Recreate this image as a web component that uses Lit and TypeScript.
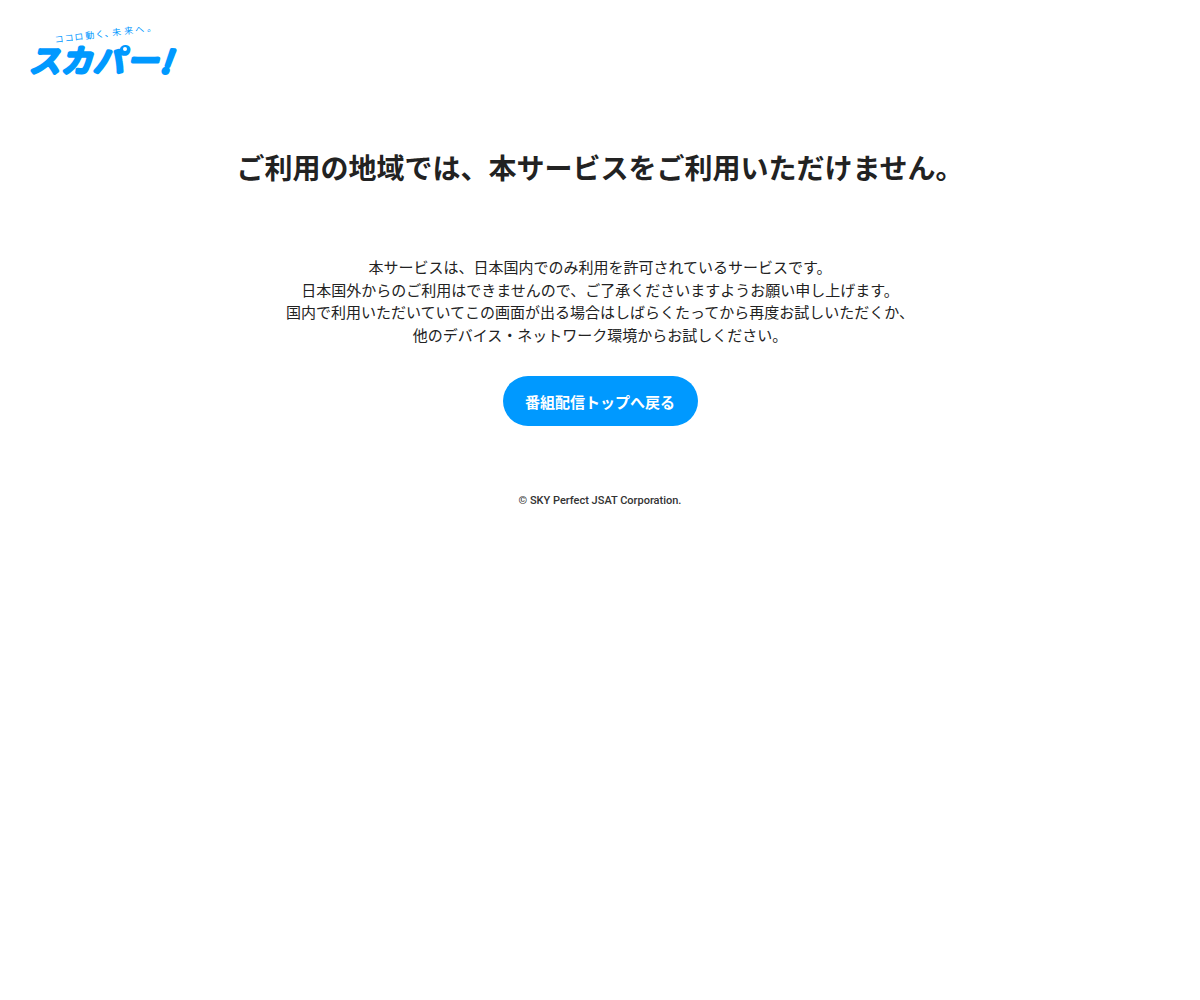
import { LitElement, html, css, svg } from "lit";
import { customElement } from "lit/decorators.js";

@customElement("site-logo")
export class SiteLogo extends LitElement {
  static styles = css`
    :host {
      display: block;
    }
    .logo {
      display: block;
      width: 150px;
      height: 54px;
      overflow: visible;
      fill: #0099ff;
      font-family: "Noto Sans CJK JP", sans-serif;
    }
    .tagline {
      font-size: 9px;
      font-weight: 400;
    }
    .wordmark {
      font-size: 31px;
      font-weight: 400;
      font-style: italic;
      stroke: #0099ff;
      stroke-width: 4;
      stroke-linecap: round;
      stroke-linejoin: round;
    }
    .ring-hole {
      fill: #fff;
    }
  `;

  render() {
    return html`<svg class="logo" viewBox="0 0 150 54" role="img" aria-label="スカパー!">
      ${svg`
        <text class="tagline" transform="translate(25 18) rotate(-7)" x="0 10 20 31 41 50 58 70 81 93">ココロ動く、未来へ。</text>
        <text class="wordmark" x="-1 31 63 97 130" y="47" rotate="0 0 0 0 6">スカパー!</text>
        <circle class="ring-hole" cx="95" cy="24" r="2" />
      `}
    </svg>`;
  }
}

@customElement("app-root")
export class AppRoot extends LitElement {
  static styles = css`
    :host {
      display: block;
      background: #fff;
      color: #222;
      font-family: "Noto Sans CJK JP", sans-serif;
      font-size: 15px;
      line-height: 1.5;
    }
    .header {
      display: flex;
      padding: 25px 30px 0;
    }
    .home {
      display: block;
    }
    .main {
      display: flex;
      flex-direction: column;
      align-items: center;
      padding: 67px 20px 0;
      text-align: center;
    }
    .title {
      margin: 0 0 68px;
      font-size: 28px;
      font-weight: 700;
      line-height: 42px;
    }
    .message {
      margin: 0 0 30px;
    }
    .back {
      box-sizing: border-box;
      min-width: 195px;
      padding: 15px 20px 13px;
      border-radius: 25px;
      background: #0099ff;
      color: #fff;
      font-weight: 700;
      line-height: 22px;
      text-decoration: none;
    }
    .footer {
      padding: 67px 20px 20px;
      color: #333;
      text-align: center;
      font-family: Roboto, sans-serif;
      font-size: 11px;
      font-weight: 500;
      line-height: 16px;
    }
  `;

  render() {
    return html`
      <header class="header">
        <a class="home" href="#" aria-label="スカパー!"><site-logo></site-logo></a>
      </header>
      <main class="main">
        <h1 class="title">ご利用の地域では、本サービスをご利用いただけません。</h1>
        <p class="message">
          本サービスは、日本国内でのみ利用を許可されているサービスです。<br />
          日本国外からのご利用はできませんので、ご了承くださいますようお願い申し上げます。<br />
          国内で利用いただいていてこの画面が出る場合はしばらくたってから再度お試しいただくか、<br />
          他のデバイス・ネットワーク環境からお試しください。
        </p>
        <a class="back" href="#">番組配信トップへ戻る</a>
      </main>
      <footer class="footer">© SKY Perfect JSAT Corporation.</footer>
    `;
  }
}
